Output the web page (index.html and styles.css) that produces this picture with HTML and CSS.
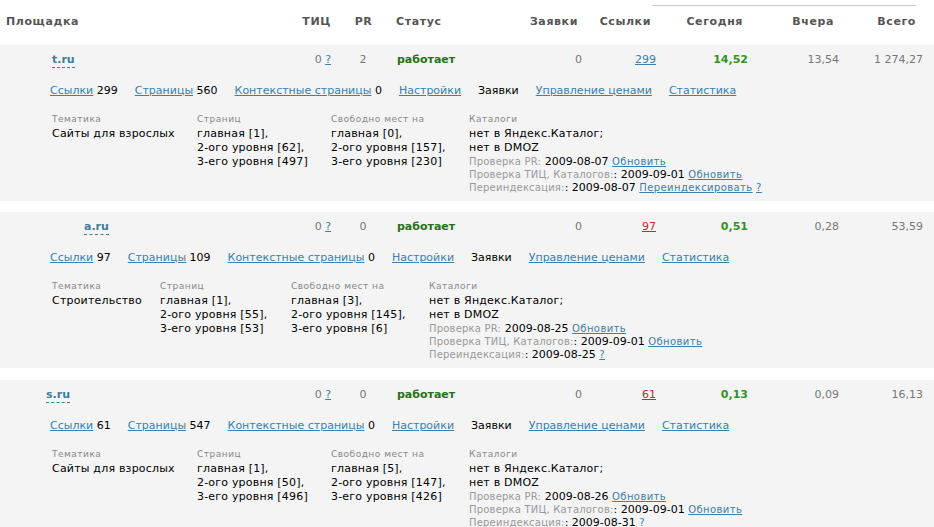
FILE: index.html
```html
<!DOCTYPE html>
<html lang="ru">
<head>
<meta charset="utf-8">
<title>Площадки</title>
<link rel="stylesheet" href="styles.css">
</head>
<body>
<div class="page">
  <div class="grid thead">
    <div class="hline"></div>
    <div class="th c-site">Площадка</div>
    <div class="th c-tic">ТИЦ</div>
    <div class="th c-pr">PR</div>
    <div class="th c-status">Статус</div>
    <div class="th c-orders">Заявки</div>
    <div class="th c-links">Ссылки</div>
    <div class="th c-today">Сегодня</div>
    <div class="th c-yest">Вчера</div>
    <div class="th c-total">Всего</div>
  </div>

  <div class="block">
    <div class="grid main">
      <div class="c-site"><a class="site ind-t">t.ru</a></div>
      <div class="c-tic num">0 <a class="lnk">?</a></div>
      <div class="c-pr num">2</div>
      <div class="c-status status">работает</div>
      <div class="c-orders num">0</div>
      <div class="c-links"><a class="lnk">299</a></div>
      <div class="c-today today">14,52</div>
      <div class="c-yest num">13,54</div>
      <div class="c-total num">1 274,27</div>
    </div>
    <div class="links">
      <span><a class="lnk">Ссылки</a> 299</span>
      <span><a class="lnk">Страницы</a> 560</span>
      <span><a class="lnk">Контекстные страницы</a> 0</span>
      <span><a class="lnk">Настройки</a></span>
      <span>Заявки</span>
      <span><a class="lnk">Управление ценами</a></span>
      <span><a class="lnk">Статистика</a></span>
    </div>
    <div class="details wide">
      <div class="dcol">
        <div class="lbl">Тематика</div>
        <div class="val">Сайты для взрослых</div>
      </div>
      <div class="dcol">
        <div class="lbl">Страниц</div>
        <div class="val">главная [1],</div>
        <div class="val">2-ого уровня [62],</div>
        <div class="val">3-его уровня [497]</div>
      </div>
      <div class="dcol">
        <div class="lbl">Свободно мест на</div>
        <div class="val">главная [0],</div>
        <div class="val">2-ого уровня [157],</div>
        <div class="val">3-его уровня [230]</div>
      </div>
      <div class="dcol">
        <div class="lbl">Каталоги</div>
        <div class="val">нет в Яндекс.Каталог;</div>
        <div class="val">нет в DMOZ</div>
        <div class="sm"><span class="g">Проверка PR:</span> 2009-08-07 <a class="lnk s">Обновить</a></div>
        <div class="sm"><span class="g">Проверка ТИЦ, Каталогов:</span>: 2009-09-01 <a class="lnk s">Обновить</a></div>
        <div class="sm"><span class="g">Переиндексация:</span>: 2009-08-07 <a class="lnk s">Переиндексировать</a> <a class="lnk s">?</a></div>
      </div>
    </div>
  </div>

  <div class="block">
    <div class="grid main">
      <div class="c-site"><a class="site ind-a">a.ru</a></div>
      <div class="c-tic num">0 <a class="lnk">?</a></div>
      <div class="c-pr num">0</div>
      <div class="c-status status">работает</div>
      <div class="c-orders num">0</div>
      <div class="c-links"><a class="lnk red">97</a></div>
      <div class="c-today today">0,51</div>
      <div class="c-yest num">0,28</div>
      <div class="c-total num">53,59</div>
    </div>
    <div class="links">
      <span><a class="lnk">Ссылки</a> 97</span>
      <span><a class="lnk">Страницы</a> 109</span>
      <span><a class="lnk">Контекстные страницы</a> 0</span>
      <span><a class="lnk">Настройки</a></span>
      <span>Заявки</span>
      <span><a class="lnk">Управление ценами</a></span>
      <span><a class="lnk">Статистика</a></span>
    </div>
    <div class="details narrow">
      <div class="dcol">
        <div class="lbl">Тематика</div>
        <div class="val">Строительство</div>
      </div>
      <div class="dcol">
        <div class="lbl">Страниц</div>
        <div class="val">главная [1],</div>
        <div class="val">2-ого уровня [55],</div>
        <div class="val">3-его уровня [53]</div>
      </div>
      <div class="dcol">
        <div class="lbl">Свободно мест на</div>
        <div class="val">главная [3],</div>
        <div class="val">2-ого уровня [145],</div>
        <div class="val">3-его уровня [6]</div>
      </div>
      <div class="dcol">
        <div class="lbl">Каталоги</div>
        <div class="val">нет в Яндекс.Каталог;</div>
        <div class="val">нет в DMOZ</div>
        <div class="sm"><span class="g">Проверка PR:</span> 2009-08-25 <a class="lnk s">Обновить</a></div>
        <div class="sm"><span class="g">Проверка ТИЦ, Каталогов:</span>: 2009-09-01 <a class="lnk s">Обновить</a></div>
        <div class="sm"><span class="g">Переиндексация:</span>: 2009-08-25 <a class="lnk s">?</a></div>
      </div>
    </div>
  </div>

  <div class="block">
    <div class="grid main">
      <div class="c-site"><a class="site ind-s">s.ru</a></div>
      <div class="c-tic num">0 <a class="lnk">?</a></div>
      <div class="c-pr num">0</div>
      <div class="c-status status">работает</div>
      <div class="c-orders num">0</div>
      <div class="c-links"><a class="lnk red">61</a></div>
      <div class="c-today today">0,13</div>
      <div class="c-yest num">0,09</div>
      <div class="c-total num">16,13</div>
    </div>
    <div class="links">
      <span><a class="lnk">Ссылки</a> 61</span>
      <span><a class="lnk">Страницы</a> 547</span>
      <span><a class="lnk">Контекстные страницы</a> 0</span>
      <span><a class="lnk">Настройки</a></span>
      <span>Заявки</span>
      <span><a class="lnk">Управление ценами</a></span>
      <span><a class="lnk">Статистика</a></span>
    </div>
    <div class="details wide">
      <div class="dcol">
        <div class="lbl">Тематика</div>
        <div class="val">Сайты для взрослых</div>
      </div>
      <div class="dcol">
        <div class="lbl">Страниц</div>
        <div class="val">главная [1],</div>
        <div class="val">2-ого уровня [50],</div>
        <div class="val">3-его уровня [496]</div>
      </div>
      <div class="dcol">
        <div class="lbl">Свободно мест на</div>
        <div class="val">главная [5],</div>
        <div class="val">2-ого уровня [147],</div>
        <div class="val">3-его уровня [426]</div>
      </div>
      <div class="dcol">
        <div class="lbl">Каталоги</div>
        <div class="val">нет в Яндекс.Каталог;</div>
        <div class="val">нет в DMOZ</div>
        <div class="sm"><span class="g">Проверка PR:</span> 2009-08-26 <a class="lnk s">Обновить</a></div>
        <div class="sm"><span class="g">Проверка ТИЦ, Каталогов:</span>: 2009-09-01 <a class="lnk s">Обновить</a></div>
        <div class="sm"><span class="g">Переиндексация:</span>: 2009-08-31 <a class="lnk s">?</a></div>
      </div>
    </div>
  </div>
</div>
</body>
</html>
```

FILE: styles.css
```css
html, body {
  margin: 0;
  padding: 0;
  background: #ffffff;
}
body {
  font-family: "DejaVu Sans", Verdana, sans-serif;
  font-size: 11px;
  line-height: 14px;
  color: #000;
}
.page {
  width: 934px;
  overflow: hidden;
}
.grid {
  display: grid;
  grid-template-columns: 290px 50px 45px 115px 90px 75px 95px 90px 84px;
}
.thead {
  grid-template-rows: 15px 14px;
  padding-bottom: 16px;
}
.hline {
  grid-column: 6 / 10;
  grid-row: 1;
  margin: 5px 18px 0 62px;
  border-top: 1px solid #c8c8c8;
  height: 0;
}
.th {
  grid-row: 2;
  font-weight: bold;
  color: #555;
  letter-spacing: 0.6px;
}
.th.c-site { padding-left: 6px; }
.th.c-tic { text-align: right; padding-right: 9px; }
.th.c-pr { text-align: center; padding-left: 2px; }
.th.c-status { padding-left: 11px; }
.th.c-orders { text-align: right; padding-right: 12px; }
.th.c-links { text-align: right; padding-right: 14px; }
.th.c-today { text-align: right; padding-right: 17px; }
.th.c-yest { text-align: right; padding-right: 16px; }
.th.c-total { text-align: right; padding-right: 18px; }

.block {
  background: #f4f4f4;
  height: 156px;
  box-sizing: border-box;
  padding-top: 8px;
  margin-bottom: 11px;
}
.block + .block + .block { margin-top: 12px; }
.block + .block { margin-top: 0; }
.main > div { line-height: 14px; }
.num { color: #777; }
.main .c-tic { text-align: right; padding-right: 9px; }
.main .c-pr { text-align: center; padding-left: 1px; }
.main .c-status { padding-left: 12px; }
.main .c-orders { text-align: right; padding-right: 8px; }
.main .c-links { text-align: right; padding-right: 9px; }
.main .c-today { text-align: right; padding-right: 12px; }
.main .c-yest { text-align: right; padding-right: 11px; }
.main .c-total { text-align: right; padding-right: 11px; }

.status {
  font-weight: bold;
  color: #267119;
}
.today {
  font-weight: bold;
  color: #2f9424;
}
.site {
  display: inline-block;
  font-weight: bold;
  color: #3f7d9b;
  border-bottom: 1px dashed #3f7d9b;
  line-height: 13px;
  padding-bottom: 1px;
}
.ind-t { margin-left: 52px; }
.ind-a { margin-left: 84px; }
.ind-s { margin-left: 46px; }

.lnk {
  color: #3d7fa6;
  text-decoration: underline;
}
.lnk.red { color: #c02a2a; }

.links {
  display: flex;
  gap: 17px;
  margin-top: 16px;
  padding-left: 50px;
  line-height: 14px;
}

.details {
  display: grid;
  margin-top: 14px;
  padding-left: 52px;
}
.details.wide { grid-template-columns: 145px 134px 138px auto; }
.details.narrow { grid-template-columns: 108px 131px 138px auto; }
.lbl {
  font-size: 9px;
  color: #888;
  letter-spacing: 0.5px;
  line-height: 15px;
}
.val {
  line-height: 14px;
  white-space: nowrap;
  letter-spacing: 0.2px;
}
.sm {
  line-height: 13px;
  white-space: nowrap;
}
.g {
  font-size: 10px;
  color: #999;
  letter-spacing: 0.2px;
}
.lnk.s {
  font-size: 10px;
  letter-spacing: 0.4px;
}
```
